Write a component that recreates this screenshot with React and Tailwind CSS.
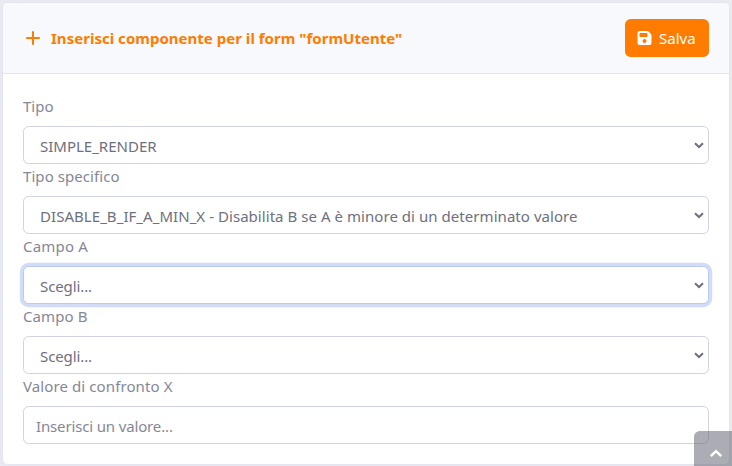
import React from "react";

const selects = [
  { label: "Tipo", value: "SIMPLE_RENDER" },
  {
    label: "Tipo specifico",
    labelTracking: "tracking-[0.07px]",
    value: "DISABLE_B_IF_A_MIN_X - Disabilita B se A è minore di un determinato valore",
    valueTracking: "tracking-[0.05px]",
  },
  {
    label: "Campo A",
    labelTracking: "tracking-[0.2px]",
    value: "Scegli...",
    valueTracking: "tracking-[-0.1px]",
    focused: true,
  },
  {
    label: "Campo B",
    labelTracking: "tracking-[0.1px]",
    value: "Scegli...",
    valueTracking: "tracking-[-0.1px]",
  },
];

function Label({ children, tracking = "" }) {
  return (
    <div className="mb-2 h-6 text-[15px] leading-6 text-[#858796]">
      <span className={tracking}>{children}</span>
    </div>
  );
}

function Select({ value, focused, tracking = "" }) {
  return (
    <div
      className={
        "flex h-[38px] items-center justify-between rounded-[5.6px] border bg-white pr-[4px] pl-4 text-[15px] text-[#6e707e] " +
        (focused ? "border-[#bac8f3] shadow-[0_0_0_3.2px_#d3dcf7]" : "border-[#d1d3e2]")
      }
    >
      <span className={"pt-px leading-6 whitespace-nowrap " + tracking}>{value}</span>
      <svg className="h-[8px] w-[10px]" viewBox="0 0 10 8" fill="none">
        <path d="M1 2.2L5 6L9 2.2" stroke="#6e707e" strokeWidth="2" />
      </svg>
    </div>
  );
}

export default function App() {
  return (
    <div className="h-[466px] w-[732px] overflow-hidden bg-[#ebecf2] px-[2px] pt-[2px] font-['Noto_Sans','Open_Sans',sans-serif]">
      <div className="h-[463px] rounded-[5.6px] border border-[#e3e6f0] bg-white shadow-[0_2px_28px_0_rgba(58,59,69,0.03)]">
        <div className="flex h-[71px] items-center justify-between rounded-t-[4.6px] border-b border-[#e3e6f0] bg-[#f8f9fc] px-5">
          <div className="flex items-center text-[#ff7c00]">
            <svg className="ml-[3px] h-[14px] w-[14px]" viewBox="0 0 14 14" fill="none">
              <path d="M7 1V13M1 7H13" stroke="currentColor" strokeWidth="2" strokeLinecap="round" />
            </svg>
            <h6 className="ml-[11px] text-[15px] leading-6 font-bold tracking-[0.02px] whitespace-nowrap">
              Inserisci componente per il form "formUtente"
            </h6>
          </div>
          <button className="flex h-[38px] w-[84px] items-center rounded-[5.6px] bg-[#ff7c00] pl-3 text-[15px] text-white">
            <svg className="h-4 w-[15px]" viewBox="0 0 448 512" fill="currentColor">
              <path d="M64 32C28.700 32 0 60.700 0 96v320c0 35.300 28.700 64 64 64h320c35.300 0 64-28.700 64-64V173.300c0-17-6.700-33.300-18.700-45.300L352 50.700C340 38.700 323.700 32 306.700 32H64zm0 96c0-17.700 14.300-32 32-32h192c17.700 0 32 14.300 32 32v64c0 17.700-14.300 32-32 32H96c-17.700 0-32-14.300-32-32v-64zm160 160a64 64 0 1 1 0 128 64 64 0 1 1 0-128z" />
            </svg>
            <span className="ml-[7px] leading-6">Salva</span>
          </button>
        </div>
        <div className="p-5">
          {selects.map((s) => (
            <div key={s.label}>
              <Label tracking={s.labelTracking}>{s.label}</Label>
              <Select value={s.value} focused={s.focused} tracking={s.valueTracking} />
            </div>
          ))}
          <Label tracking="tracking-[0.1px]">Valore di confronto X</Label>
          <div className="flex h-[38px] items-center rounded-[5.6px] border border-[#d1d3e2] bg-white px-3 text-[15px] text-[#858796]">
            <span className="pt-px leading-6 tracking-[-0.15px]">Inserisci un valore...</span>
          </div>
        </div>
      </div>
      <div className="absolute top-[431px] left-[694px] h-[35px] w-[38px] overflow-hidden rounded-tl-[5.6px] bg-[rgba(90,92,105,0.5)]">
        <svg className="mt-[18px] ml-[15px] h-[9px] w-[14px]" viewBox="0 0 14 9" fill="none">
          <path d="M1.8 7.200L7 2.200L12.200 7.200" stroke="white" strokeWidth="2.5" />
        </svg>
      </div>
    </div>
  );
}
